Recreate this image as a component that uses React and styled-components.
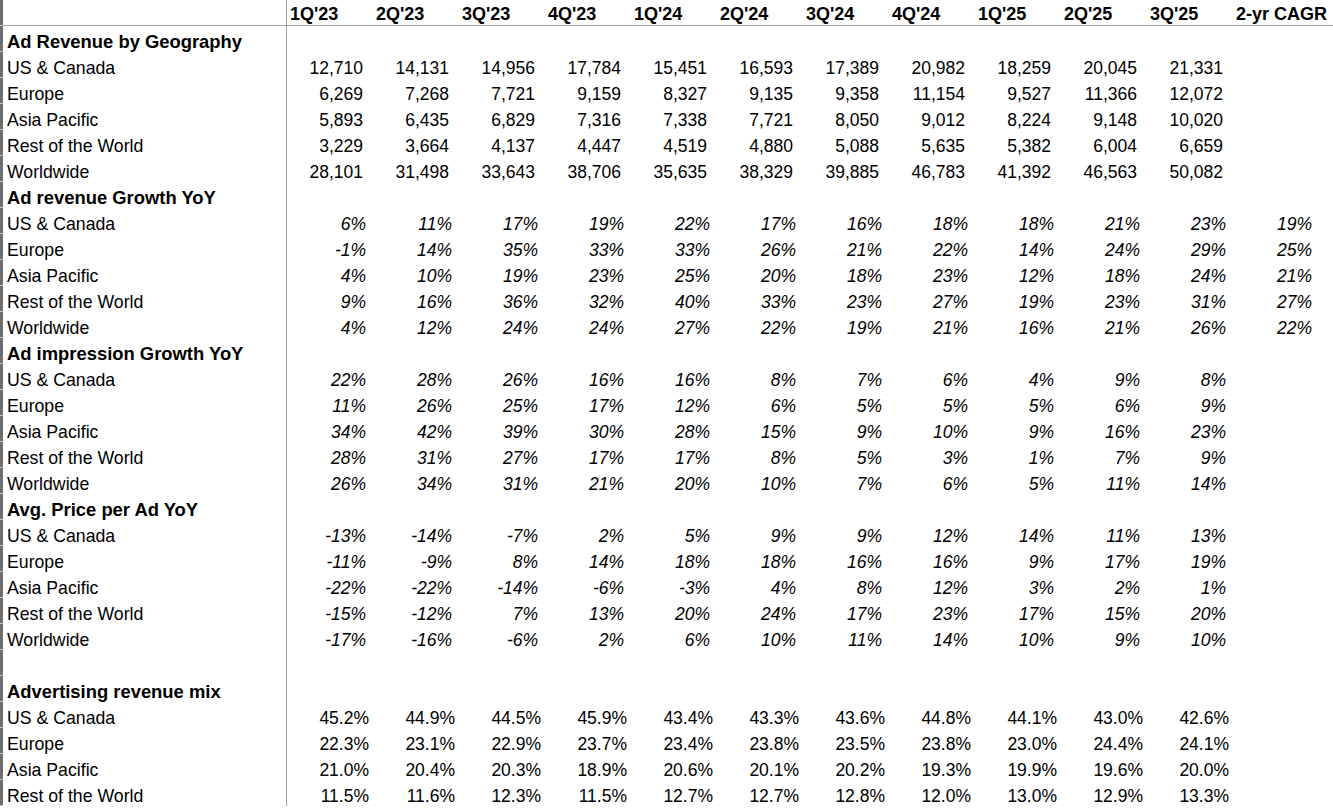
import React from 'react'
import styled, { createGlobalStyle } from 'styled-components'

const GlobalStyle = createGlobalStyle`
  html, body {
    margin: 0;
    padding: 0;
    background: #ffffff;
  }
  body {
    font-family: 'Liberation Sans', Arial, sans-serif;
    color: #000000;
  }
`

const Sheet = styled.div`
  width: 1333px;
  height: 808px;
  overflow: hidden;
  display: flex;
  flex-direction: column;
`

const Row = styled.div`
  display: grid;
  grid-template-columns: 3px 284px repeat(12, 86px) 1fr;
  height: 26px;
  flex-shrink: 0;
`

const HeaderRow = styled(Row)`
  & > div:not(:first-child) {
    border-bottom: 1px solid #a3a3a3;
  }
`

const Gutter = styled.div`
  background: #6e6e6e;
  box-shadow: inset 0 -1px 0 #c9c9c9;
`

const Cell = styled.div`
  box-sizing: border-box;
  height: 26px;
  padding-top: 7px;
  line-height: 18px;
  font-size: 17.5px;
  white-space: nowrap;
  overflow: visible;
`

const Label = styled(Cell)`
  padding-left: 4px;
  border-right: 1px solid #a3a3a3;
  font-weight: ${(props) => (props.bold ? 700 : 400)};
  font-size: ${(props) => (props.bold ? '18.4px' : '17.7px')};
`

const HeadCell = styled(Cell)`
  padding-top: 5px;
  padding-left: 3px;
  font-weight: 700;
  font-size: 18px;
`

const Value = styled(Cell)`
  text-align: right;
  padding-right: ${(props) => props.pad}px;
  font-style: ${(props) => (props.italic ? 'italic' : 'normal')};
`

const quarters = ["1Q'23", "2Q'23", "3Q'23", "4Q'23", "1Q'24", "2Q'24", "3Q'24", "4Q'24", "1Q'25", "2Q'25", "3Q'25", '2-yr CAGR']

const regions = ['US & Canada', 'Europe', 'Asia Pacific', 'Rest of the World', 'Worldwide']

const pct = (arr) => arr.map((v) => (v === null ? '' : `${v}%`))

const sections = [
  {
    title: 'Ad Revenue by Geography',
    kind: 'num',
    rows: [
      ['12,710', '14,131', '14,956', '17,784', '15,451', '16,593', '17,389', '20,982', '18,259', '20,045', '21,331'],
      ['6,269', '7,268', '7,721', '9,159', '8,327', '9,135', '9,358', '11,154', '9,527', '11,366', '12,072'],
      ['5,893', '6,435', '6,829', '7,316', '7,338', '7,721', '8,050', '9,012', '8,224', '9,148', '10,020'],
      ['3,229', '3,664', '4,137', '4,447', '4,519', '4,880', '5,088', '5,635', '5,382', '6,004', '6,659'],
      ['28,101', '31,498', '33,643', '38,706', '35,635', '38,329', '39,885', '46,783', '41,392', '46,563', '50,082'],
    ],
  },
  {
    title: 'Ad revenue Growth YoY',
    kind: 'pct',
    rows: [
      pct([6, 11, 17, 19, 22, 17, 16, 18, 18, 21, 23, 19]),
      pct([-1, 14, 35, 33, 33, 26, 21, 22, 14, 24, 29, 25]),
      pct([4, 10, 19, 23, 25, 20, 18, 23, 12, 18, 24, 21]),
      pct([9, 16, 36, 32, 40, 33, 23, 27, 19, 23, 31, 27]),
      pct([4, 12, 24, 24, 27, 22, 19, 21, 16, 21, 26, 22]),
    ],
  },
  {
    title: 'Ad impression Growth YoY',
    kind: 'pct',
    rows: [
      pct([22, 28, 26, 16, 16, 8, 7, 6, 4, 9, 8]),
      pct([11, 26, 25, 17, 12, 6, 5, 5, 5, 6, 9]),
      pct([34, 42, 39, 30, 28, 15, 9, 10, 9, 16, 23]),
      pct([28, 31, 27, 17, 17, 8, 5, 3, 1, 7, 9]),
      pct([26, 34, 31, 21, 20, 10, 7, 6, 5, 11, 14]),
    ],
  },
  {
    title: 'Avg. Price per Ad YoY',
    kind: 'pct',
    rows: [
      pct([-13, -14, -7, 2, 5, 9, 9, 12, 14, 11, 13]),
      pct([-11, -9, 8, 14, 18, 18, 16, 16, 9, 17, 19]),
      pct([-22, -22, -14, -6, -3, 4, 8, 12, 3, 2, 1]),
      pct([-15, -12, 7, 13, 20, 24, 17, 23, 17, 15, 20]),
      pct([-17, -16, -6, 2, 6, 10, 11, 14, 10, 9, 10]),
    ],
  },
  { blank: true },
  {
    title: 'Advertising revenue mix',
    kind: 'mix',
    rows: [
      ['45.2%', '44.9%', '44.5%', '45.9%', '43.4%', '43.3%', '43.6%', '44.8%', '44.1%', '43.0%', '42.6%'],
      ['22.3%', '23.1%', '22.9%', '23.7%', '23.4%', '23.8%', '23.5%', '23.8%', '23.0%', '24.4%', '24.1%'],
      ['21.0%', '20.4%', '20.3%', '18.9%', '20.6%', '20.1%', '20.2%', '19.3%', '19.9%', '19.6%', '20.0%'],
      ['11.5%', '11.6%', '12.3%', '11.5%', '12.7%', '12.7%', '12.8%', '12.0%', '13.0%', '12.9%', '13.3%'],
    ],
  },
]

const padFor = { num: 10, pct: 7, mix: 4 }

const DataRow = ({ label, bold, values = [], kind }) => (
  <Row>
    <Gutter />
    <Label bold={bold}>{label}</Label>
    {quarters.map((q, i) => (
      <Value key={q} italic={kind === 'pct'} pad={padFor[kind] || 0}>
        {values[i] || ''}
      </Value>
    ))}
    <div />
  </Row>
)

export default function App() {
  return (
    <>
      <GlobalStyle />
      <Sheet>
        <HeaderRow>
          <Gutter />
          <Label />
          {quarters.map((q) => (
            <HeadCell key={q}>{q}</HeadCell>
          ))}
          <div />
        </HeaderRow>
        {sections.map((s, si) =>
          s.blank ? (
            <DataRow key={`blank-${si}`} label="" />
          ) : (
            <React.Fragment key={s.title}>
              <DataRow label={s.title} bold />
              {s.rows.map((vals, ri) => (
                <DataRow key={regions[ri]} label={regions[ri]} values={vals} kind={s.kind} />
              ))}
            </React.Fragment>
          )
        )}
      </Sheet>
    </>
  )
}
